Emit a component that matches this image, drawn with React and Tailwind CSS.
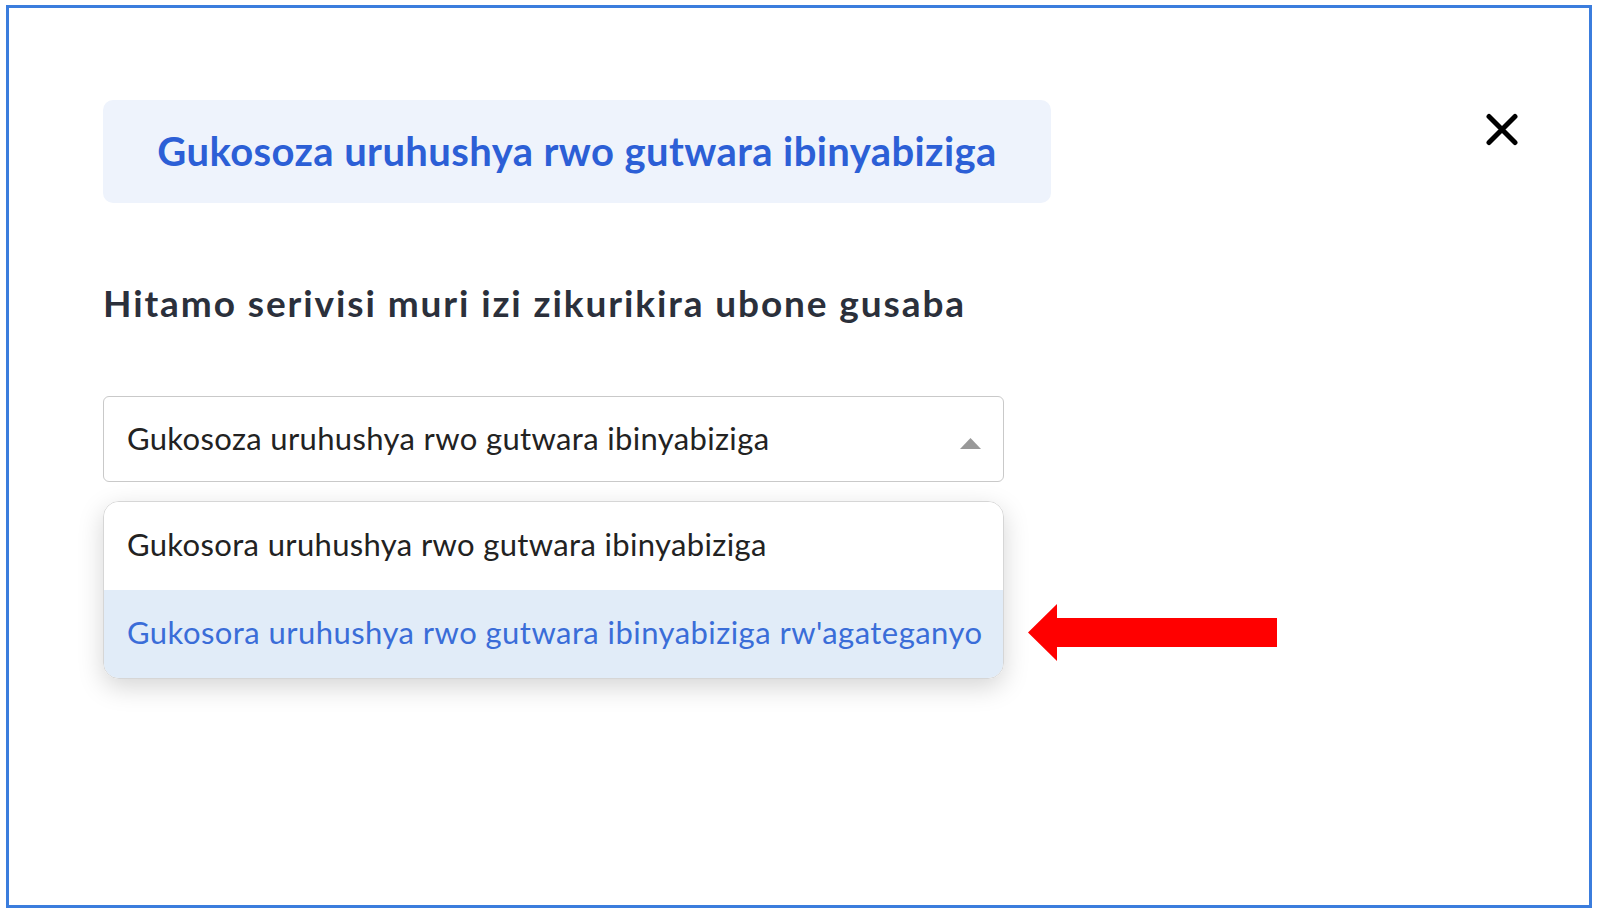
import React from "react";

export default function App() {
  return (
    <div className="w-[1600px] h-[918px] bg-white pl-[6px] pt-[5px]" style={{ fontFamily: "Lato, 'Open Sans', sans-serif" }}>
      <div className="relative w-[1586px] h-[903px] border-[3px] border-[#3b7ddd] pl-[94px] pt-[92px] pr-[71px]">
        <div className="flex justify-between items-start">
          <div className="w-[948px] h-[103px] rounded-[10px] bg-[#eef3fc] flex items-center justify-center">
            <span className="text-[40px] leading-[47px] font-bold tracking-[0.4px] text-[#2c5fd6]">Gukosoza uruhushya rwo gutwara ibinyabiziga</span>
          </div>
          <svg className="mt-[13px]" width="32" height="33" viewBox="0 0 32 33">
            <path d="M3 3.5 L29 29.5 M29 3.5 L3 29.5" stroke="#000" strokeWidth="5" strokeLinecap="round" />
          </svg>
        </div>

        <h2 className="mt-[78px] text-[37px] leading-[43px] font-bold tracking-[1.9px] text-[#2b303b]">Hitamo serivisi muri izi zikurikira ubone gusaba</h2>

        <div className="mt-[72px] w-[901px] h-[86px] border border-[#c9c9c9] rounded-[6px] flex items-center justify-between pl-[23px] pr-[22px]">
          <span className="text-[31px] leading-[36px] tracking-[0.35px] text-[#222] mb-[3px]">Gukosoza uruhushya rwo gutwara ibinyabiziga</span>
          <svg width="21" height="11" viewBox="0 0 21 11" className="mt-[9px]">
            <polygon points="10.5,0 21,11 0,11" fill="#999" />
          </svg>
        </div>

        <div className="mt-[19px] w-[901px] border border-[#d6d6d6] rounded-[16px] overflow-hidden shadow-[0_8px_26px_rgba(0,0,0,0.17)]">
          <div className="h-[88px] flex items-center pl-[23px] pb-[4px] bg-white">
            <span className="text-[31px] leading-[36px] tracking-[0.35px] text-[#222]">Gukosora uruhushya rwo gutwara ibinyabiziga</span>
          </div>
          <div className="h-[88px] flex items-center pl-[23px] pb-[4px] bg-[#e1ecf8]">
            <span className="text-[31px] leading-[36px] tracking-[0.45px] text-[#3a6dd8]">Gukosora uruhushya rwo gutwara ibinyabiziga rw'agateganyo</span>
          </div>
        </div>

        <svg className="absolute left-[1019px] top-[596px]" width="249" height="57" viewBox="0 0 249 57">
          <polygon points="0,28.5 29,0 29,14 249,14 249,43 29,43 29,57" fill="#ff0000" />
        </svg>
      </div>
    </div>
  );
}
